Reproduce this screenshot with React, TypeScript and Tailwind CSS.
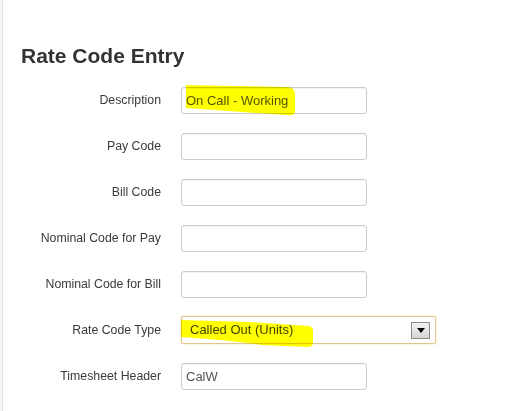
const fields = [
  { label: "Description", value: "On Call - Working" },
  { label: "Pay Code", value: "" },
  { label: "Bill Code", value: "" },
  { label: "Nominal Code for Pay", value: "" },
  { label: "Nominal Code for Bill", value: "" },
];

function Row({ label, children }: { label: string; children: React.ReactNode }) {
  return (
    <div className="flex items-center">
      <label className="w-[140px] text-right text-[12.3px] text-[#3a3a3a] leading-none">
        {label}
      </label>
      <div className="ml-[20px]">{children}</div>
    </div>
  );
}

function TextBox({ value }: { value: string }) {
  return (
    <div className="w-[186px] h-[27px] flex items-center border border-[#cccccc] rounded-[3px] bg-white pl-[4px] text-[13px] text-[#555555] shadow-[inset_0_1px_1px_rgba(0,0,0,0.06)]">
      {value}
    </div>
  );
}

export default function App() {
  return (
    <div
      className="relative w-[511px] h-[411px] bg-white flex overflow-hidden"
      style={{ fontFamily: '"Liberation Sans", Arial, sans-serif' }}
    >
      <div className="w-[3px] bg-[#f6f6f6] border-r border-[#e3e3e3] shrink-0" />

      <div className="flex-1 pl-[18px] pt-[44px]">
        <h2 className="text-[21px] leading-[24px] font-bold text-[#333333]">
          Rate Code Entry
        </h2>

        <div className="mt-[19px] flex flex-col gap-[19px]">
          {fields.map((f) => (
            <Row key={f.label} label={f.label}>
              <TextBox value={f.value} />
            </Row>
          ))}

          <Row label="Rate Code Type">
            <div className="w-[255px] h-[28px] -mt-px flex items-center justify-between border border-[#e2c48e] rounded-[2px] bg-white pl-[8px] pr-[5px] text-[13px] text-[#444444] shadow-[0_0_2px_rgba(226,190,120,0.6)]">
              <span>Called Out (Units)</span>
              <span className="w-[19px] h-[17px] flex items-center justify-center border border-[#8a8a8a] bg-gradient-to-b from-[#f4f4f4] to-[#d4d4d4]">
                <span className="w-0 h-0 border-l-[4px] border-r-[4px] border-t-[5px] border-l-transparent border-r-transparent border-t-black" />
              </span>
            </div>
          </Row>

          <Row label="Timesheet Header">
            <TextBox value="CalW" />
          </Row>
        </div>
      </div>

      <svg
        className="absolute inset-0 pointer-events-none mix-blend-multiply"
        width="511"
        height="411"
        viewBox="0 0 511 411"
      >
        <path
          d="M186,85 L288,87 Q295,88 295,94 L295,112 Q294,116 288,115 L255,113 L215,110 L186,108 Z"
          fill="#ffff00"
        />
        <path
          d="M181,320 L250,322 L309,326 Q313,327 313,331 L313,344 Q312,347 308,347 L262,345 Q228,340 181,337 Z"
          fill="#ffff00"
        />
      </svg>
    </div>
  );
}
